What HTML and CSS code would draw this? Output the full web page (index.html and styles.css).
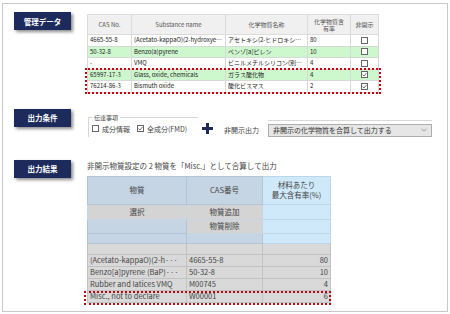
FILE: index.html
```html
<!DOCTYPE html>
<html lang="ja">
<head>
    <meta charset="UTF-8">
    <meta name="viewport" content="width=device-width, initial-scale=1.0">
    <title>非開示物質の出力設定</title>
    <link rel="stylesheet" href="styles.css">
</head>
<body>
    <div class="frame">
        <div class="sec sec-data">
            <div class="tag">管理データ</div>
            <div class="grid-wrap">
                <table class="src">
                    <colgroup>
                        <col class="w-cas"><col class="w-sub"><col class="w-jp"><col class="w-rate"><col class="w-hide">
                    </colgroup>
                    <thead>
                        <tr>
                            <th>CAS No.</th>
                            <th>Substance name</th>
                            <th>化学物質名称</th>
                            <th class="two">化学物質含<br>有率</th>
                            <th>非開示</th>
                        </tr>
                    </thead>
                    <tbody>
                        <tr>
                            <td>4665-55-8</td>
                            <td class="cut">(Acetato-kappaO)(2-hydroxyethyl)mercury</td>
                            <td class="cut">アセトキシ(2-ヒドロキシエチル)水銀</td>
                            <td>80</td>
                            <td class="chk"><span class="box"></span></td>
                        </tr>
                        <tr class="green">
                            <td>50-32-8</td>
                            <td>Benzo(a)pyrene</td>
                            <td>ベンゾ[a]ピレン</td>
                            <td>10</td>
                            <td class="chk"><span class="box"></span></td>
                        </tr>
                        <tr>
                            <td>-</td>
                            <td>VMQ</td>
                            <td class="cut">ビニルメチルシリコン(別名シリコーンゴム)</td>
                            <td>4</td>
                            <td class="chk"><span class="box"></span></td>
                        </tr>
                        <tr class="green">
                            <td>65997-17-3</td>
                            <td>Glass, oxide, chemicals</td>
                            <td>ガラス酸化物</td>
                            <td>4</td>
                            <td class="chk"><span class="box"><svg width="5" height="5" viewBox="0 0 5 5"><polyline points="0.5,2.6 2,4 4.6,0.8" fill="none" stroke="#555" stroke-width="0.8"/></svg></span></td>
                        </tr>
                        <tr>
                            <td>76214-86-3</td>
                            <td>Bismuth oxide</td>
                            <td>酸化ビスマス</td>
                            <td>2</td>
                            <td class="chk"><span class="box"><svg width="5" height="5" viewBox="0 0 5 5"><polyline points="0.5,2.6 2,4 4.6,0.8" fill="none" stroke="#555" stroke-width="0.8"/></svg></span></td>
                        </tr>
                    </tbody>
                </table>
                <div class="mark mark-src"></div>
            </div>
        </div>

        <div class="sec sec-cond">
            <div class="tag">出力条件</div>
            <fieldset class="group">
                <legend>伝達事項</legend>
                <label class="opt"><span class="box"></span>成分情報</label>
                <label class="opt"><span class="box"><svg width="5" height="5" viewBox="0 0 5 5"><polyline points="0.5,2.6 2,4 4.6,0.8" fill="none" stroke="#555" stroke-width="0.8"/></svg></span>全成分(FMD)</label>
            </fieldset>
            <svg class="plus" width="11" height="11" viewBox="0 0 11 11">
                <rect x="4" y="0" width="3" height="11" fill="#1c2b5c"/>
                <rect x="0" y="4" width="11" height="3" fill="#1c2b5c"/>
            </svg>
            <span class="cond-label">非開示出力</span>
            <div class="select-wrap">
                <div class="select">
                    <span>非開示の化学物質を合算して出力する</span>
                    <svg width="6" height="4" viewBox="0 0 6 4"><polyline points="0.5,0.8 3,3.2 5.5,0.8" fill="none" stroke="#888" stroke-width="0.8"/></svg>
                </div>
            </div>
        </div>

        <div class="sec sec-out">
            <div class="tag">出力結果</div>
            <div class="out">
                <p class="note">非開示物質設定の 2 物質を「Misc.」として合算して出力</p>
                <div class="grid-wrap">
                    <table class="res">
                        <colgroup>
                            <col class="w-name"><col class="w-no"><col class="w-max">
                        </colgroup>
                        <thead>
                            <tr>
                                <th>物質</th>
                                <th>CAS番号</th>
                                <th class="light">材料あたり<br>最大含有率(%)</th>
                            </tr>
                        </thead>
                        <tbody>
                            <tr class="r-btn">
                                <td class="btn">選択</td>
                                <td class="btn">物質追加</td>
                                <td class="light"></td>
                            </tr>
                            <tr class="r-btn2">
                                <td class="blue"></td>
                                <td class="btn">物質削除</td>
                                <td class="light"></td>
                            </tr>
                            <tr class="r-blank">
                                <td class="blue"></td>
                                <td class="blue"></td>
                                <td class="light"></td>
                            </tr>
                            <tr class="r-empty">
                                <td></td><td></td><td></td>
                            </tr>
                            <tr>
                                <td>(Acetato-kappaO)(2-h···</td>
                                <td>4665-55-8</td>
                                <td class="num">80</td>
                            </tr>
                            <tr>
                                <td>Benzo[a]pyrene (BaP)···</td>
                                <td>50-32-8</td>
                                <td class="num">10</td>
                            </tr>
                            <tr>
                                <td>Rubber and latices VMQ</td>
                                <td>M00745</td>
                                <td class="num">4</td>
                            </tr>
                            <tr>
                                <td>Misc., not to declare</td>
                                <td>W00001</td>
                                <td class="num">6</td>
                            </tr>
                        </tbody>
                    </table>
                    <div class="mark mark-res"></div>
                </div>
            </div>
        </div>
    </div>
</body>
</html>
```

FILE: styles.css
```css
body {
    margin: 0;
    background: #fff;
    font-family: "Noto Sans CJK JP", "Noto Sans", sans-serif;
    color: #333;
}

.frame {
    margin: 3px 0 0 2px;
    width: 446px;
    height: 309px;
    box-sizing: border-box;
    border: 1px solid #c8c8c8;
    padding: 8px 11px 0 11px;
}

.sec {
    display: flex;
    align-items: flex-start;
}

.tag {
    flex: none;
    width: 57px;
    height: 18px;
    margin-right: 16px;
    background: #1c2b5c;
    color: #fff;
    font-size: 7.5px;
    font-weight: bold;
    display: flex;
    align-items: center;
    justify-content: center;
    box-shadow: 2px 2px 3px rgba(0, 0, 0, 0.45);
}

.grid-wrap {
    position: relative;
}

.mark {
    position: absolute;
    border: 2px dotted #c8000a;
    box-sizing: border-box;
}

/* 管理データ */
.src {
    margin-top: 2px;
    border-collapse: collapse;
    table-layout: fixed;
    width: 291px;
    font-size: 6px;
    color: #222;
}

.w-cas { width: 44px; }
.w-sub { width: 94px; }
.w-jp { width: 82px; }
.w-rate { width: 43px; }
.w-hide { width: 28px; }

.src th {
    height: 19px;
    padding: 0;
    background: #f0f0f0;
    border: 1px solid #dcdcdc;
    font-weight: normal;
    color: #555;
    line-height: 7px;
}

.src td {
    height: 10.5px;
    padding: 0 2px;
    border: 1px solid #d8d8d8;
    white-space: nowrap;
    line-height: 8px;
}

.src td.cut {
    overflow: hidden;
    text-overflow: ellipsis;
}

.src tr.green td {
    background: #cdf7cd;
}

.src td.chk {
    padding: 0;
    background: #fff;
}

.src tr.green td.chk {
    background: #cdf7cd;
}

.box {
    display: flex;
    flex: none;
    align-items: center;
    justify-content: center;
    width: 7px;
    height: 7px;
    box-sizing: border-box;
    border: 1px solid #666;
    background: #fff;
}

.chk .box {
    margin: 0 auto;
}

.mark-src {
    left: -2px;
    top: 56px;
    width: 296px;
    height: 26px;
}

/* 出力条件 */
.sec-cond {
    margin-top: 16px;
    height: 30px;
}

.group {
    margin: 5px 0 0 1px;
    padding: 2px 4px 3px 3px;
    width: 110px;
    box-sizing: border-box;
    border: 1px solid #d6d6d6;
    border-right: none;
    border-bottom: none;
    display: flex;
    gap: 7px;
}

.group legend {
    padding: 0 2px;
    font-size: 6px;
    line-height: 8px;
    color: #444;
}

.opt {
    display: flex;
    align-items: center;
    gap: 3px;
    font-size: 7px;
    line-height: 10px;
    color: #444;
    white-space: nowrap;
}

.plus {
    flex: none;
    margin: 14px 0 0 4px;
}

.cond-label {
    margin: 16px 0 0 11px;
    font-size: 7px;
    line-height: 10px;
    color: #444;
    white-space: nowrap;
}

.select-wrap {
    margin: 11px 0 0 9px;
    width: 164px;
    padding-top: 3px;
    border-top: 1px solid #d8d8d8;
}

.select {
    height: 13px;
    box-sizing: border-box;
    border: 1px solid #adadad;
    background: #e6e6e6;
    display: flex;
    align-items: center;
    justify-content: space-between;
    padding: 0 4px;
    font-size: 7px;
    color: #333;
}

/* 出力結果 */
.sec-out {
    margin-top: 21px;
}

.note {
    margin: 0 0 4px;
    font-size: 7.5px;
    line-height: 12px;
    color: #444;
    white-space: nowrap;
}

.res {
    border-collapse: collapse;
    table-layout: fixed;
    width: 243px;
    font-size: 7.5px;
    color: #444;
}

.w-name { width: 99px; }
.w-no { width: 76px; }
.w-max { width: 68px; }

.res th {
    height: 27px;
    padding: 0;
    background: #c6d5e4;
    border: 1px solid #b3c4d6;
    font-weight: normal;
    line-height: 10px;
}

.res th.light {
    background: #cfe9fb;
    border-color: #b9d6ea;
}

.res td {
    height: 11px;
    padding: 0 2px;
    background: #d9d9d9;
    border: 1px solid #c2c2c2;
    white-space: nowrap;
    overflow: hidden;
    line-height: 10px;
}

.res tr.r-btn td { height: 14px; }
.res tr.r-btn2 td { height: 13px; }
.res tr.r-blank td { height: 9px; }
.res tr.r-empty td { height: 10px; }

.res td.btn {
    background: #d4d4d4;
    border-color: #c6d5e4;
    text-align: center;
}

.res td.blue {
    background: #c6d5e4;
    border-color: #b3c4d6;
}

.res td.light {
    background: #cfe9fb;
    border-color: #b9d6ea;
}

.res td.num {
    text-align: right;
}

.mark-res {
    left: -3px;
    bottom: -2px;
    width: 247px;
    height: 14px;
}
```
